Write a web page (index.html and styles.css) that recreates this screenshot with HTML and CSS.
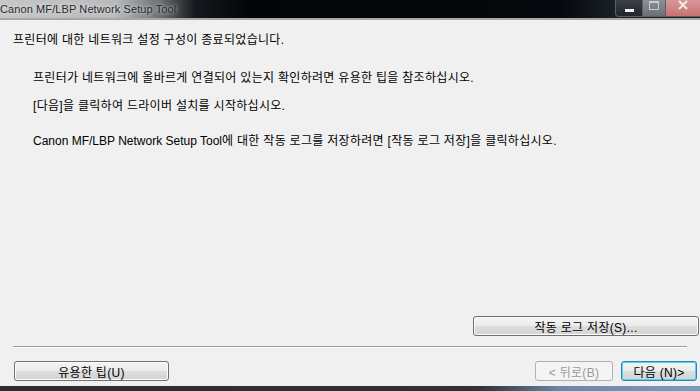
FILE: index.html
```html
<!DOCTYPE html>
<html lang="ko">
<head>
    <meta charset="UTF-8">
    <title>Canon MF/LBP Network Setup Tool</title>
    <link rel="stylesheet" href="styles.css">
</head>
<body>
    <div class="window">
        <div class="titlebar">
            <span class="title">Canon MF/LBP Network Setup Tool</span>
            <div class="caption-buttons">
                <div class="cap cap-min"><span class="min-bar"></span></div>
                <div class="cap cap-max"><span class="max-box"></span></div>
                <div class="cap cap-close">
                    <svg width="12" height="10" viewBox="0 0 12 10"><path d="M2 1 L10 9 M10 1 L2 9" stroke="#fff" stroke-width="2" opacity="0.8"/></svg>
                </div>
            </div>
        </div>
        <div class="content">
            <p class="heading">프린터에 대한 네트워크 설정 구성이 종료되었습니다.</p>
            <p class="msg msg-1">프린터가 네트워크에 올바르게 연결되어 있는지 확인하려면 유용한 팁을 참조하십시오.</p>
            <p class="msg msg-2">[다음]을 클릭하여 드라이버 설치를 시작하십시오.</p>
            <p class="msg msg-3"><span class="latin">Canon MF/LBP Network Setup Tool</span>에 대한 작동 로그를 저장하려면 [작동 로그 저장]을 클릭하십시오.</p>
        </div>
        <div class="log-row">
            <button class="btn btn-log">작동 로그 저장(S)...</button>
        </div>
        <div class="separator"></div>
        <div class="button-row">
            <button class="btn btn-tips">유용한 팁(U)</button>
            <div class="nav">
                <button class="btn btn-back" disabled>&lt; 뒤로(B)</button>
                <button class="btn btn-next">다음 (N)&gt;</button>
            </div>
        </div>
        <div class="taskbar"></div>
    </div>
</body>
</html>
```

FILE: styles.css
```css
body {
    margin: 0;
    font-family: "Liberation Sans", "Noto Sans CJK KR", sans-serif;
    font-size: 12px;
    color: #000;
    background: #f0f0f0;
}
.window {
    width: 700px;
    height: 391px;
    display: flex;
    flex-direction: column;
    overflow: hidden;
    background: #f0f0f0;
}
.titlebar {
    height: 18px;
    border-bottom: 2px solid #a4a6a8;
    display: flex;
    justify-content: space-between;
    background: linear-gradient(90deg, #c4c6c8 0, #b8babc 115px, #6c7074 160px, #15181c 195px, #030508 250px, #05080c 560px, #1c2228 620px);
}
.title {
    padding-top: 3px;
    color: #2a2a2a;
    font-size: 11px;
    letter-spacing: 0.1px;
    text-shadow: 0 0 4px #f4f4f4;
}
.caption-buttons {
    display: flex;
    height: 17px;
}
.cap {
    display: flex;
    align-items: center;
    justify-content: center;
    border: 1px solid #5a6066;
    border-top: none;
}
.cap-min {
    width: 26px;
    border-radius: 0 0 0 4px;
    background: linear-gradient(#3a4046, #22272c);
}
.min-bar {
    width: 9px;
    height: 3px;
    margin-top: 5px;
    background: #f0f0f0;
}
.cap-max {
    width: 22px;
    border-left: none;
    background: linear-gradient(#8a9096, #6a7076);
}
.max-box {
    width: 8px;
    height: 6px;
    border: 1px solid #c8ccd0;
    border-top-width: 2px;
    margin-top: -6px;
}
.cap-close {
    width: 34px;
    border-left: none;
    border-right: none;
    background: linear-gradient(#d89898, #c87272);
}
.cap-close svg {
    margin-top: -6px;
}
.content {
    flex: 1;
    padding: 0 13px;
}
.content p {
    margin: 0;
    line-height: 16px;
    letter-spacing: 0.3px;
}
.content .latin {
    letter-spacing: 0;
}
.heading {
    padding-top: 12px;
}
.msg {
    padding-left: 20px;
}
.msg-1 {
    margin-top: 22px !important;
}
.msg-2 {
    margin-top: 12px !important;
}
.msg-3 {
    margin-top: 19px !important;
}
.log-row {
    display: flex;
    justify-content: flex-end;
    padding-right: 1px;
}
.separator {
    margin: 10px 13px 0 13px;
    height: 1px;
    background: #a0a0a0;
    border-bottom: 1px solid #fff;
}
.button-row {
    display: flex;
    justify-content: space-between;
    padding: 13px 3px 0 14px;
    height: 25px;
}
.nav {
    display: flex;
    gap: 8px;
}
.btn {
    height: 20px;
    padding: 0;
    font-family: "Liberation Sans", "Noto Sans CJK KR", sans-serif;
    font-size: 12px;
    letter-spacing: 0.3px;
    color: #000;
    border: 1px solid #707070;
    border-radius: 3px;
    background: linear-gradient(#f4f4f4 0, #ebebeb 50%, #dddddd 51%, #d4d4d4 100%);
    box-shadow: inset 0 0 0 1px #fcfcfc;
}
.btn-log {
    width: 226px;
}
.btn-tips {
    width: 155px;
}
.btn-back {
    width: 78px;
    color: #9a9a9a;
    border-color: #adb2b5;
    background: #f4f4f4;
    box-shadow: none;
}
.btn-next {
    width: 76px;
    border-color: #3c7fb1;
    box-shadow: inset 0 0 0 1px #48d8fb;
}
.taskbar {
    height: 5px;
    margin-top: auto;
    background: linear-gradient(90deg, #2a2c2e 0, #303234 480px, #6a88a4 560px, #7a9cbc 700px);
}
```
